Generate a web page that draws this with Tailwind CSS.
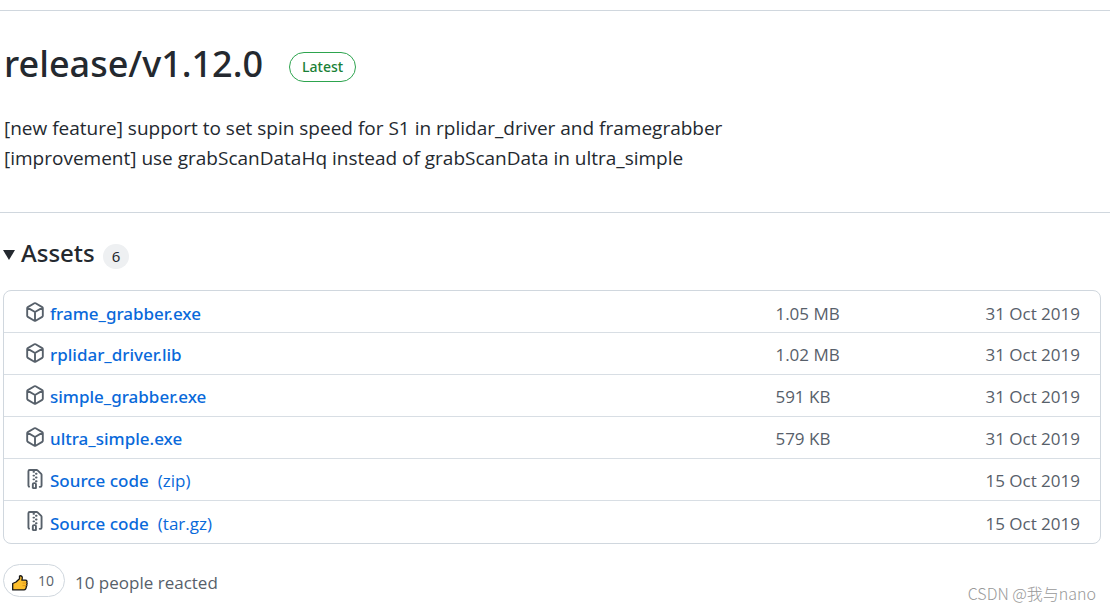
<!DOCTYPE html>
<html lang="en">
<head>
<meta charset="utf-8">
<meta name="viewport" content="width=device-width, initial-scale=1">
<title>release/v1.12.0</title>
<script src="https://cdn.jsdelivr.net/npm/@tailwindcss/browser@4"></script>
</head>
<body class="relative min-h-screen bg-white font-['Open_Sans','Noto_Sans_CJK_SC',sans-serif] text-[19px] text-[#24292f]">
<svg class="hidden" aria-hidden="true">
  <symbol id="package" viewBox="0 0 16 16"><path fill="none" stroke="currentColor" stroke-width="1.5" stroke-linejoin="round" d="M7.5 1.040a1 1 0 0 1 1 0l5.250 3.045a1 1 0 0 1 .500.866v6.098a1 1 0 0 1-.500.866L8.500 14.960a1 1 0 0 1-1 0l-5.250-3.045a1 1 0 0 1-.500-.866V4.951a1 1 0 0 1 .500-.866zM2 4.520 8 8l6-3.480M8 8v6.800"/></symbol>
  <symbol id="zip" viewBox="0 0 16 16"><path fill-rule="evenodd" d="M3.5 1.75a.25.25 0 0 1 .25-.25h3a.75.75 0 0 0 0 1.5h.5a.75.75 0 0 0 0-1.5h2.086a.25.25 0 0 1 .177.073l2.914 2.914a.25.25 0 0 1 .073.177v8.586a.25.25 0 0 1-.25.25h-.5a.75.75 0 0 0 0 1.5h.5A1.75 1.75 0 0 0 14 13.25V4.664c0-.464-.184-.909-.513-1.237L10.573.513A1.75 1.75 0 0 0 9.336 0H3.75A1.75 1.75 0 0 0 2 1.75v11.5c0 .649.353 1.214.874 1.515a.75.75 0 1 0 .752-1.298.25.25 0 0 1-.126-.217V1.75zM8.75 3a.75.75 0 0 0 0 1.5h.5a.75.75 0 0 0 0-1.5h-.5zM6 5.25a.75.75 0 0 1 .75-.75h.5a.75.75 0 0 1 0 1.5h-.5A.75.75 0 0 1 6 5.25zm2 1.5A.75.75 0 0 1 8.75 6h.5a.75.75 0 0 1 0 1.5h-.5A.75.75 0 0 1 8 6.75zm-1.25.75a.75.75 0 0 0 0 1.5h.5a.75.75 0 0 0 0-1.5h-.5zM8 9.75A.75.75 0 0 1 8.750 9h.5a.75.75 0 0 1 0 1.5h-.5A.75.75 0 0 1 8 9.750zm-.75.75a1.75 1.75 0 0 0-1.75 1.75v3c0 .414.336.75.75.75h2.500a.75.75 0 0 0 .75-.75v-3a1.75 1.75 0 0 0-1.75-1.75h-.5zM7 12.250a.25.25 0 0 1 .25-.25h.5a.25.25 0 0 1 .25.25v2.250H7v-2.250z"/></symbol>
</svg>
<main>
  <section class="mt-[10px] border-t border-[#d0d7de] pb-[39px] pl-1">
    <div class="flex items-center gap-[26px] pt-[26px]">
      <h1 class="font-['Noto_Sans','Open_Sans',sans-serif] text-4xl leading-[54px] font-medium">release/v1.12.0</h1>
      <a href="#latest" class="mt-[6px] rounded-full border border-[#2da44e] px-3 font-['Noto_Sans','Open_Sans',sans-serif] text-sm leading-7 font-medium text-[#1a7f37]">Latest</a>
    </div>
    <p class="mt-[22px] leading-[30px]">[new feature] support to set spin speed for S1 in rplidar_driver and framegrabber<br>[improvement] use grabScanDataHq instead of grabScanData in ultra_simple</p>
  </section>
  <details open class="group border-t border-[#d0d7de] pr-[9px] pl-[3px]">
    <summary class="flex cursor-pointer list-none items-center pt-6 pb-[21px]">
      <svg class="mt-1 mr-[6px] h-[10px] w-3 -rotate-90 group-open:rotate-0" viewBox="0 0 12 10" fill="currentColor" aria-hidden="true"><path d="M0 0h12L6 10z"/></svg>
      <span class="font-['Noto_Sans','Open_Sans',sans-serif] text-2xl font-medium">Assets</span>
      <span class="mt-[6px] ml-2 rounded-full bg-[#eef0f2] px-[9px] font-['Noto_Sans','Open_Sans',sans-serif] text-[15px] leading-[25px]">6</span>
    </summary>
    <div class="rounded-lg border border-[#d0d7de] pb-px">
      <table class="w-full text-[17px] text-[#57606a]">
        <tbody class="divide-y divide-[#d8dee4]">
          <tr class="h-[41px]"><td class="pt-1 pl-[21px]"><div class="flex items-center gap-[5px]"><svg class="mb-[2px] size-5" fill="currentColor" aria-hidden="true"><use href="#package"/></svg><a href="#f" class="font-['Noto_Sans','Open_Sans',sans-serif] font-medium text-[#0969da]">frame_grabber.exe</a></div></td><td class="w-[210px] pt-1">1.05 MB</td><td class="w-[114px] pt-1 pr-5 text-right whitespace-nowrap">31 Oct 2019</td></tr>
          <tr class="h-[42px]"><td class="pt-1 pl-[21px]"><div class="flex items-center gap-[5px]"><svg class="mb-1 size-5" fill="currentColor" aria-hidden="true"><use href="#package"/></svg><a href="#r" class="font-['Noto_Sans','Open_Sans',sans-serif] font-medium text-[#0969da]">rplidar_driver.lib</a></div></td><td class="pt-1">1.02 MB</td><td class="pt-1 pr-5 text-right whitespace-nowrap">31 Oct 2019</td></tr>
          <tr class="h-[42px]"><td class="pt-1 pl-[21px]"><div class="flex items-center gap-[5px]"><svg class="mb-1 size-5" fill="currentColor" aria-hidden="true"><use href="#package"/></svg><a href="#s" class="font-['Noto_Sans','Open_Sans',sans-serif] font-medium text-[#0969da]">simple_grabber.exe</a></div></td><td class="pt-1">591 KB</td><td class="pt-1 pr-5 text-right whitespace-nowrap">31 Oct 2019</td></tr>
          <tr class="h-[42px]"><td class="pt-1 pl-[21px]"><div class="flex items-center gap-[5px]"><svg class="mb-1 size-5" fill="currentColor" aria-hidden="true"><use href="#package"/></svg><a href="#u" class="font-['Noto_Sans','Open_Sans',sans-serif] font-medium text-[#0969da]">ultra_simple.exe</a></div></td><td class="pt-1">579 KB</td><td class="pt-1 pr-5 text-right whitespace-nowrap">31 Oct 2019</td></tr>
          <tr class="h-[42px]"><td class="pt-1 pl-[21px]"><div class="flex items-center gap-[5px]"><svg class="mb-1 size-5" fill="currentColor" aria-hidden="true"><use href="#zip"/></svg><a href="#zipball" class="flex gap-[9px] text-[#0969da]"><span class="font-['Noto_Sans','Open_Sans',sans-serif] font-medium">Source code</span><span>(zip)</span></a></div></td><td></td><td class="pt-1 pr-5 text-right whitespace-nowrap">15 Oct 2019</td></tr>
          <tr class="h-[42px]"><td class="pt-1 pl-[21px]"><div class="flex items-center gap-[5px]"><svg class="mb-1 size-5" fill="currentColor" aria-hidden="true"><use href="#zip"/></svg><a href="#tarball" class="flex gap-[9px] text-[#0969da]"><span class="font-['Noto_Sans','Open_Sans',sans-serif] font-medium">Source code</span><span>(tar.gz)</span></a></div></td><td></td><td class="pt-1 pr-5 text-right whitespace-nowrap">15 Oct 2019</td></tr>
        </tbody>
      </table>
    </div>
  </details>
  <div class="mt-5 flex items-center gap-[10px] pl-[3px] text-[17px] text-[#57606a]">
    <button class="flex h-[33px] items-center gap-[10px] rounded-full border border-[#d0d7de] pr-[10px] pl-2 text-sm">
      <svg class="mt-1 size-4" viewBox="0 0 16 16" aria-hidden="true"><path d="M.7 8.500 4 7 7.500 3.700V1c1.500-.800 3 .500 2.800 2l-.400 2.200h3.600c1.500 0 1.800 1.500 1.200 2.300.500.700.400 1.500 0 2 .300.800 0 1.600-.400 2 .100 1.900-.900 3.400-2.300 3.400H.700z" fill="#fdbf2d" stroke="#151515" stroke-width="1.300" stroke-linejoin="round"/><path d="M10.500 8h4M10.500 10.600h4" stroke="#d48a13" stroke-width=".8"/></svg>
      10
    </button>
    <span class="pt-1">10 people reacted</span>
  </div>
</main>
<div class="absolute top-[583px] right-[14px] font-['Noto_Sans_CJK_SC',sans-serif] text-base leading-5 font-light text-[#999]">CSDN @我与nano</div>
</body>
</html>
